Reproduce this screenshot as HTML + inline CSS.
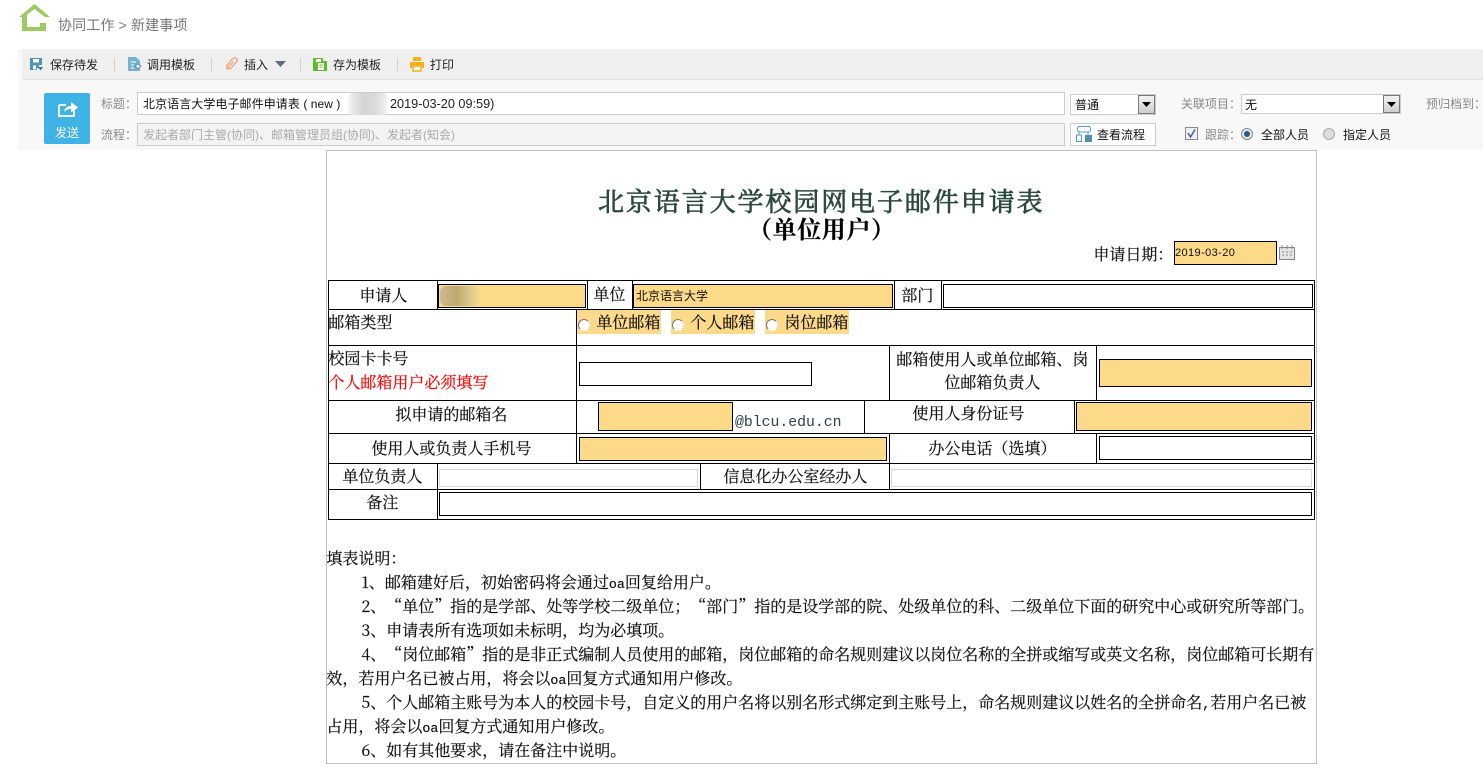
<!DOCTYPE html>
<html lang="zh-CN"><head><meta charset="utf-8"><title>新建事项</title>
<style>
html,body{margin:0;padding:0;background:#fff;width:1483px;height:778px;overflow:hidden}
body{position:relative;font-family:"Liberation Sans","Noto Sans CJK SC",sans-serif;color:#000;text-spacing-trim:space-all;text-autospace:no-autospace}
.a{position:absolute;box-sizing:border-box}
.t{position:absolute;white-space:nowrap;font-size:12px;line-height:16px}
.s{position:absolute;white-space:nowrap;font-family:"Noto Serif CJK SC","WenQuanYi Zen Hei",serif;font-size:16px;line-height:24px;color:#111;-webkit-text-stroke:.2px #111;margin-left:-.7px}
.m{font-family:"Liberation Mono",monospace;font-size:13.33px}
.hl{background:#fdd98a;border:1px solid #000}
.wh{background:#fff;border:1px solid #000}
.gy{background:#fff;border:1px solid #d8d8d8;position:absolute;box-sizing:border-box}
.h{position:absolute;background:#000}
.pick{position:absolute;background:#fdd98a}
.r{position:absolute;width:12px;height:12px;border-radius:50%;box-sizing:border-box;background:#fff;border:1.500px solid;border-color:#777 #e4e4e4 #fff #777}
.sep{position:absolute;top:58px;width:1px;height:13px;background:#cfcfcf}
.gray{color:#888}
</style></head><body>

<svg class="a" style="left:19px;top:4px" width="31" height="28" viewBox="0 0 31 28"><path d="M0 13L15.500 0L31 13H26L15.500 5L5 13Z" fill="#9ccb5f"/><path d="M3 12L8 9V23H21V19H27V27H3Z" fill="#9ccb5f"/></svg>
<div class="t" style="left:58px;top:17px;font-size:14px;letter-spacing:.15px;color:#777">协同工作 &gt; 新建事项</div>

<div class="a" style="left:22px;top:49px;width:1461px;height:31px;background:#efefef;border-bottom:1px solid #e2e2e2"></div>
<div class="a" style="left:18px;top:49px;width:4px;height:101px;background:#f8f8f8"></div>
<div class="a" style="left:22px;top:80px;width:1461px;height:70px;background:#f8f8f8"></div>

<svg class="a" style="left:30px;top:58px" width="13" height="13" viewBox="0 0 13 13"><path d="M0 0H12V7H9V10H7V12H0Z" fill="#4f94bd"/><rect x="3" y="1" width="6" height="3.500" fill="#fff"/><rect x="3" y="7.500" width="3" height="4" fill="#fff"/><path d="M8 9H13L10.500 12.500Z" fill="#3a6d8e"/></svg>
<div class="t" style="left:50px;top:57px;color:#222">保存待发</div>
<div class="sep" style="left:114px"></div>
<svg class="a" style="left:128px;top:57px" width="14" height="15" viewBox="0 0 14 15"><path d="M0 0H8L12 4V14H0Z" fill="#74b3d1"/><path d="M3 5h5M3 8h3M3 11h3" stroke="#fff" stroke-width="1"/><path d="M7 9l3-2 3 2-3 3z" fill="#fff" stroke="#4f94bd"/></svg>
<div class="t" style="left:147px;top:57px;color:#222">调用模板</div>
<div class="sep" style="left:211px"></div>
<svg class="a" style="left:225px;top:57px" width="13" height="14" viewBox="0 0 13 14"><path d="M3 12.500C1 11 1 9 2.500 7.500L7.500 2C9 .5 11 .5 12 2C12.800 3.200 12 4.500 11 5.500L6 11C5 12 4 12 3.500 11.300C3 10.500 3.500 9.800 4.200 9L8.500 4.500" fill="none" stroke="#f0a270" stroke-width="1.300"/></svg>
<div class="t" style="left:244px;top:57px;color:#222">插入</div>
<svg class="a" style="left:275px;top:61px" width="11" height="7"><path d="M0 0H11L5.500 6Z" fill="#5d6b80"/></svg>
<div class="sep" style="left:300px"></div>
<svg class="a" style="left:313px;top:58px" width="14" height="13" viewBox="0 0 14 13"><path d="M0 0H10V3H14V13H0Z" fill="#5dbb2c"/><rect x="3" y="1" width="5" height="3" fill="#fff"/><rect x="5" y="5" width="6" height="7" fill="#fff"/><path d="M6.500 7h3M6.500 9h3" stroke="#5dbb2c"/></svg>
<div class="t" style="left:333px;top:57px;color:#222">存为模板</div>
<div class="sep" style="left:397px"></div>
<svg class="a" style="left:410px;top:57px" width="14" height="15" viewBox="0 0 14 15"><rect x="3" y="0" width="8" height="4" fill="#fbb116"/><rect x="0" y="5" width="14" height="6" fill="#fbb116"/><rect x="3" y="9" width="8" height="5" fill="#fff" stroke="#fbb116" stroke-width="1.500"/></svg>
<div class="t" style="left:430px;top:57px;color:#222">打印</div>

<div class="a" style="left:44px;top:93px;width:46px;height:51px;background:#40b3e6;border-radius:2px"></div>
<svg class="a" style="left:57px;top:100px" width="22" height="18" viewBox="0 0 22 18"><path d="M2 5H9M2 5V16H17V10" fill="none" stroke="#e8f5fb" stroke-width="2"/><path d="M7 12C8 7.500 11 6 14 6V2L21 7.500L14 12.500V9C11 9 9 10 7 12Z" fill="#fff"/></svg>
<div class="t" style="left:55px;top:125px;color:#fff;font-size:12px">发送</div>

<div class="t gray" style="left:101px;top:96px">标题：</div>
<div class="a" style="left:137px;top:92px;width:928px;height:23px;background:#fff;border:1px solid #ccc"></div>
<div class="t" style="left:143px;top:96px;color:#111;font-size:12px;letter-spacing:.07px">北京语言大学电子邮件申请表 ( new )</div>
<div class="a" style="left:346px;top:93px;width:44px;height:22px;background:linear-gradient(90deg,#fff,#e8e8e8 15%,#d4d4d4 40%,#dcdcdc 70%,#efefef 90%,#fff);border-radius:8px"></div>
<div class="t" style="left:390px;top:96px;color:#222;font-size:12.700px">2019-03-20 09:59)</div>
<div class="t gray" style="left:101px;top:127px">流程：</div>
<div class="a" style="left:137px;top:123px;width:928px;height:23px;background:#f3f3f3;border:1px solid #ccc"></div>
<div class="t" style="left:143px;top:127px;color:#aaa;font-size:12px">发起者部门主管(协同)、邮箱管理员组(协同)、发起者(知会)</div>

<div class="a" style="left:1070px;top:94px;width:86px;height:21px;background:#fff;border:1px solid #ccc"></div>
<div class="t" style="left:1075px;top:97px;color:#111">普通</div>
<div class="a" style="left:1138px;top:95px;width:17px;height:19px;background:linear-gradient(#f2f2f2,#cfcfcf);border:1px solid #777"></div>
<svg class="a" style="left:1142px;top:102px" width="9" height="5"><path d="M0 0H9L4.500 5Z" fill="#000"/></svg>
<div class="a" style="left:1070px;top:123px;width:86px;height:23px;background:#fff;border:1px solid #ccc"></div>
<svg class="a" style="left:1076px;top:126px" width="16" height="16" viewBox="0 0 16 16"><rect x="1.500" y=".5" width="13" height="5.500" rx="2" fill="none" stroke="#4f9fc4"/><rect x=".5" y="9" width="5" height="6.500" fill="none" stroke="#4f9fc4"/><rect x="9" y="9" width="7" height="7" fill="#4f8fb5"/><path d="M3 6V9M12 6V9" stroke="#4f9fc4"/></svg>
<div class="t" style="left:1097px;top:127px;color:#111">查看流程</div>

<div class="t gray" style="left:1181px;top:96px">关联项目：</div>
<div class="a" style="left:1241px;top:94px;width:160px;height:20px;background:#fff;border:1px solid #ccc"></div>
<div class="t" style="left:1245px;top:97px;color:#111">无</div>
<div class="a" style="left:1383px;top:95px;width:17px;height:18px;background:linear-gradient(#f2f2f2,#cfcfcf);border:1px solid #777"></div>
<svg class="a" style="left:1387px;top:102px" width="9" height="5"><path d="M0 0H9L4.500 5Z" fill="#000"/></svg>
<div class="t gray" style="left:1426px;top:96px">预归档到：</div>

<div class="a" style="left:1185px;top:127px;width:13px;height:13px;background:#eef0f6;border:1px solid #888"></div>
<svg class="a" style="left:1186px;top:128px" width="11" height="11"><path d="M2 5L4.500 9L9 1.500" fill="none" stroke="#4a5a9c" stroke-width="1.500"/></svg>
<div class="t gray" style="left:1205px;top:127px">跟踪：</div>
<div class="a" style="left:1241px;top:128px;width:12px;height:12px;border-radius:50%;background:#e8e8e8;border:1px solid #888"></div>
<div class="a" style="left:1244px;top:131px;width:6px;height:6px;border-radius:50%;background:#1d5f8f"></div>
<div class="t" style="left:1261px;top:127px;color:#111">全部人员</div>
<div class="a" style="left:1323px;top:128px;width:12px;height:12px;border-radius:50%;background:#ddd;border:1px solid #aaa"></div>
<div class="t" style="left:1343px;top:127px;color:#111">指定人员</div>

<!-- form frame -->
<div class="a" style="left:326px;top:150px;width:991px;height:614px;border:1px solid #c0c0c0;background:#fff"></div>

<div class="s" style="left:598px;top:185px;margin-left:0;font-size:26px;line-height:32px;letter-spacing:1.900px;color:#2c4a3c;-webkit-text-stroke:.7px #2c4a3c">北京语言大学校园网电子邮件申请表</div>
<div class="s" style="left:748px;top:214px;margin-left:0;font-size:24px;line-height:28px;letter-spacing:.6px;font-weight:700;color:#000">（单位用户）</div>
<div class="s" style="left:1094px;top:242px">申请日期：</div>
<div class="a hl" style="left:1174px;top:241px;width:103px;height:24px"></div>
<div class="t" style="left:1175px;top:245px;color:#111;font-size:11px;letter-spacing:.4px">2019-03-20</div>
<svg class="a" style="left:1279px;top:245px" width="16" height="15" viewBox="0 0 16 15"><path d="M.5 2.500H15.500V14.500H.5Z" fill="#e4e4e4" stroke="#888"/><path d="M3 0V4M8 0V4M13 0V4" stroke="#888"/><path d="M3 7h2M7 7h2M11 7h2M3 10h2M7 10h2M11 10h2" stroke="#888"/></svg>

<!-- table -->
<div class="a" style="left:328px;top:280px;width:987px;height:240px;border:1px solid #000;background:#fff"></div>
<div class="h" style="left:328px;top:309px;width:987px;height:1px"></div>
<div class="h" style="left:328px;top:345px;width:987px;height:1px"></div>
<div class="h" style="left:328px;top:400px;width:987px;height:1px"></div>
<div class="h" style="left:328px;top:433px;width:987px;height:1px"></div>
<div class="h" style="left:328px;top:463px;width:987px;height:1px"></div>
<div class="h" style="left:328px;top:489px;width:987px;height:1px"></div>
<div class="h" style="left:437px;top:280px;width:1px;height:29px"></div>
<div class="h" style="left:587px;top:280px;width:1px;height:29px"></div>
<div class="h" style="left:632px;top:280px;width:1px;height:29px"></div>
<div class="h" style="left:894px;top:280px;width:1px;height:29px"></div>
<div class="h" style="left:941px;top:280px;width:1px;height:29px"></div>
<div class="h" style="left:576px;top:309px;width:1px;height:154px"></div>
<div class="h" style="left:889px;top:345px;width:1px;height:55px"></div>
<div class="h" style="left:1096px;top:345px;width:1px;height:55px"></div>
<div class="h" style="left:864px;top:400px;width:1px;height:33px"></div>
<div class="h" style="left:1074px;top:400px;width:1px;height:33px"></div>
<div class="h" style="left:889px;top:433px;width:1px;height:30px"></div>
<div class="h" style="left:1096px;top:433px;width:1px;height:30px"></div>
<div class="h" style="left:437px;top:463px;width:1px;height:56px"></div>
<div class="h" style="left:700px;top:463px;width:1px;height:26px"></div>
<div class="h" style="left:889px;top:463px;width:1px;height:26px"></div>

<!-- inputs -->
<div class="a hl" style="left:438px;top:284px;width:148px;height:24px"></div>
<div class="a" style="left:440px;top:286px;width:41px;height:20px;background:linear-gradient(90deg,#cdbb92,#c0a86f 40%,#dfc98d 75%,#fdd98a);border-radius:6px"></div>
<div class="a hl" style="left:633px;top:284px;width:260px;height:24px"></div>
<div class="t" style="left:636px;top:288px;color:#111">北京语言大学</div>
<div class="a wh" style="left:943px;top:284px;width:370px;height:24px"></div>

<div class="pick" style="left:577px;top:310px;width:84px;height:24px"></div>
<div class="pick" style="left:671px;top:310px;width:84px;height:24px"></div>
<div class="pick" style="left:765px;top:310px;width:84px;height:24px"></div>
<div class="r" style="left:578px;top:319px"></div>
<div class="r" style="left:672px;top:319px"></div>
<div class="r" style="left:766px;top:319px"></div>

<div class="a wh" style="left:579px;top:362px;width:233px;height:24px"></div>
<div class="a hl" style="left:1099px;top:359px;width:213px;height:28px"></div>
<div class="a hl" style="left:598px;top:402px;width:135px;height:29px"></div>
<div class="a hl" style="left:1076px;top:402px;width:236px;height:29px"></div>
<div class="a hl" style="left:579px;top:437px;width:308px;height:24px"></div>
<div class="a wh" style="left:1099px;top:436px;width:213px;height:24px"></div>
<div class="gy" style="left:439px;top:469px;width:259px;height:18px"></div>
<div class="gy" style="left:891px;top:469px;width:421px;height:18px"></div>
<div class="a wh" style="left:439px;top:492px;width:873px;height:24px"></div>

<!-- labels -->
<div class="s" style="left:360px;top:283px">申请人</div>
<div class="s" style="left:594px;top:282px">单位</div>
<div class="s" style="left:902px;top:283px">部门</div>
<div class="s" style="left:329px;top:310px">邮箱类型</div>
<div class="s" style="left:597px;top:310px">单位邮箱</div>
<div class="s" style="left:691px;top:310px">个人邮箱</div>
<div class="s" style="left:785px;top:310px">岗位邮箱</div>
<div class="s" style="left:329px;top:346px">校园卡卡号</div>
<div class="s" style="left:329px;top:370px;color:#f00;-webkit-text-stroke:.2px #f00">个人邮箱用户必须填写</div>
<div class="s" style="left:897px;top:347px">邮箱使用人或单位邮箱、岗</div>
<div class="s" style="left:945px;top:370px">位邮箱负责人</div>
<div class="s" style="left:396px;top:402px">拟申请的邮箱名</div>
<div class="t m" style="left:735px;top:415px;font-size:14.800px;color:#2a3f4f">@blcu.edu.cn</div>
<div class="s" style="left:913px;top:401px">使用人身份证号</div>
<div class="s" style="left:372px;top:436px">使用人或负责人手机号</div>
<div class="s" style="left:929px;top:436px">办公电话（选填）</div>
<div class="s" style="left:343px;top:464px">单位负责人</div>
<div class="s" style="left:724px;top:464px">信息化办公室经办人</div>
<div class="s" style="left:367px;top:490px">备注</div>

<!-- notes -->
<div class="s" style="left:327px;top:546px">填表说明：</div>
<div class="s" style="left:362px;top:570px">1、邮箱建好后，初始密码将会通过<span class="m">oa</span>回复给用户。</div>
<div class="s" style="left:362px;top:594px">2、“单位”指的是学部、处等学校二级单位；“部门”指的是设学部的院、处级单位的科、二级单位下面的研究中心或研究所等部门。</div>
<div class="s" style="left:362px;top:618px">3、申请表所有选项如未标明，均为必填项。</div>
<div class="s" style="left:362px;top:642px">4、“岗位邮箱”指的是非正式编制人员使用的邮箱，岗位邮箱的命名规则建议以岗位名称的全拼或缩写或英文名称，岗位邮箱可长期有</div>
<div class="s" style="left:327px;top:666px">效，若用户名已被占用，将会以<span class="m">oa</span>回复方式通知用户修改。</div>
<div class="s" style="left:362px;top:690px">5、个人邮箱主账号为本人的校园卡号，自定义的用户名将以别名形式绑定到主账号上，命名规则建议以姓名的全拼命名<span class="m">,</span>若用户名已被</div>
<div class="s" style="left:327px;top:714px">占用，将会以<span class="m">oa</span>回复方式通知用户修改。</div>
<div class="s" style="left:362px;top:738px">6、如有其他要求，请在备注中说明。</div>
</body></html>
